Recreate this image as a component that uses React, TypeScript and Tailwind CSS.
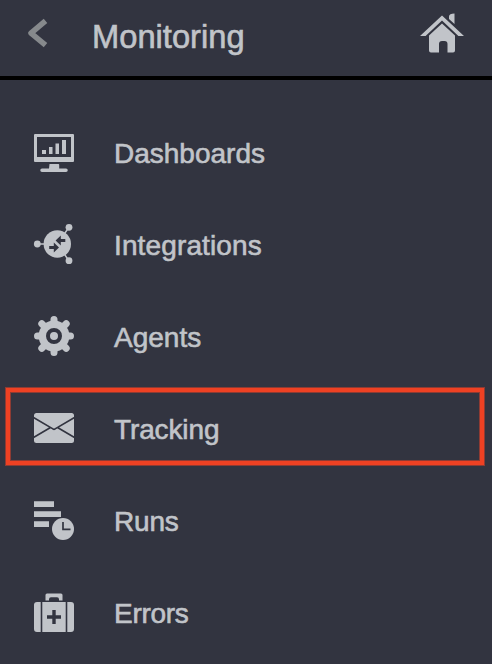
import type { ReactNode } from "react";

const BG = "#323440";

function Dashboard() {
  return (
    <svg width="60" height="60" viewBox="0 0 60 60" fill="currentColor">
      <path fillRule="evenodd" d="M11 10h38a1 1 0 0 1 1 1v26a1 1 0 0 1-1 1H11a1 1 0 0 1-1-1V11a1 1 0 0 1 1-1zm2 3v20h34V13z" />
      <path d="M18 26h4v4h-4zM25 23h3.5v7H25zM31.5 19.5H35V30h-3.5zM38 16h4v14h-4zM25.5 40h9a.7.7 0 0 1 .7.7V44.5H42a1.5 1.5 0 0 1 0 3.5H18a1.5 1.5 0 0 1 0-3.5h7z" />
    </svg>
  );
}

function Integration() {
  return (
    <svg width="60" height="60" viewBox="0 0 60 60" fill="currentColor">
      <circle cx="33.3" cy="28" r="13.7" />
      <circle cx="13.3" cy="28" r="3.4" />
      <circle cx="45" cy="11.3" r="3.4" />
      <circle cx="45" cy="44.7" r="3.4" />
      <path d="M14 28h8M45 11l-6 9M45 45l-6-9" stroke="currentColor" strokeWidth="1.5" />
      <path fill={BG} d="M31.6 24.4l5.2-5v3.5H41.3v3h-4.5v3.5zM35 31.6l-5.2-5v3.5h-4.6v3h4.6v3.5z" />
    </svg>
  );
}

function Gear() {
  return (
    <svg width="60" height="60" viewBox="0 0 60 60" fill="currentColor">
      <g stroke="currentColor" strokeWidth="7" strokeLinecap="round">
        <path d="M30 13.5v33M13.5 30h33M17.8 17.8l24.4 24.4M42.2 17.8l-24.4 24.4" />
      </g>
      <circle cx="30" cy="30" r="15.4" />
      <circle cx="30" cy="30" r="6" fill="currentColor" stroke={BG} strokeWidth="4" />
    </svg>
  );
}

function Envelope() {
  return (
    <svg width="60" height="60" viewBox="0 0 60 60">
      <rect x="10" y="15" width="40" height="30" rx="2.5" fill="currentColor" />
      <path d="M9.5 19.5L28 30.3q2 2 4 0L50.5 19.5M9.5 39.5L26.5 29.5M50.5 39.5L33.5 29.5" fill="none" stroke={BG} strokeWidth="1.6" />
    </svg>
  );
}

function Runs() {
  return (
    <svg width="60" height="60" viewBox="0 0 60 60" fill="currentColor">
      <path d="M10 11.3h20V17H10zM10 21.3h27V27H10zM10 31.3h15V37H10z" />
      <circle cx="39" cy="39" r="12" fill={BG} />
      <circle cx="39" cy="39" r="11" />
      <path d="M39 32v7.3h7.5" fill="none" stroke={BG} strokeWidth="1.7" />
    </svg>
  );
}

function Kit() {
  return (
    <svg width="60" height="60" viewBox="0 0 60 60" fill="currentColor">
      <path d="M21.5 16.5V11q0-1.5 1.5-1.5h14q1.5 0 1.5 1.5v5.5H35v-1.2q0-2-2-2h-6q-2 0-2 2v1.2z" />
      <path d="M16.7 18v30H13q-3 0-3-3V21q0-3 3-3zM43.3 18v30H47q3 0 3-3V21q0-3-3-3zM18.3 18h23.4v30H18.3z" />
      <path d="M30 26v14M23 33h14" stroke={BG} strokeWidth="3.4" />
    </svg>
  );
}

const items: { label: string; icon: ReactNode; iconClass: string; labelClass: string }[] = [
  { label: "Dashboards", icon: <Dashboard />, iconClass: "pt-0.5", labelClass: "tracking-normal" },
  { label: "Integrations", icon: <Integration />, iconClass: "pt-0.5", labelClass: "tracking-[0.13px]" },
  { label: "Agents", icon: <Gear />, iconClass: "pb-0.5", labelClass: "tracking-normal" },
  { label: "Tracking", icon: <Envelope />, iconClass: "pb-0.5", labelClass: "tracking-[-0.12px]" },
  { label: "Runs", icon: <Runs />, iconClass: "pb-0.5", labelClass: "tracking-[-0.2px]" },
  { label: "Errors", icon: <Kit />, iconClass: "pt-0.5", labelClass: "tracking-[-0.3px]" },
];

export default function App() {
  return (
    <div className="relative h-[664px] w-[492px] overflow-hidden bg-[#323440] font-['Liberation_Sans',Arial,sans-serif] text-[#c1c4c9]">
      <header className="flex h-20 items-start border-b-4 border-black">
        <svg className="mt-[13px] ml-6 shrink-0 text-[#86898c]" width="28" height="40" viewBox="0 0 28 40" fill="none" stroke="currentColor">
          <path d="M21.5 7.8L7 20.2 21.5 32.2" strokeWidth="5.5" strokeLinejoin="round" />
        </svg>
        <h1 className="mt-[17px] ml-10 text-[32.7px] leading-10 [-webkit-text-stroke:0.6px_currentColor]">Monitoring</h1>
        <svg className="mt-2.5 mr-[26px] ml-auto" width="48" height="46" viewBox="0 0 48 46" fill="currentColor">
          <path d="M2 26L24 5.5 46 26h-5.6L24 10.5 7.6 26zM31 6.5c0-2 2-3 5.5-3V14L31 9z" />
          <path d="M24 13.5L37 25.5V40.5q0 2-2 2h-5.5V34q0-3-3-3h-2.5q-3 0-3 3v8.5h-8q-2 0-2-2V25.5z" />
        </svg>
      </header>
      <nav className="pt-[27px]">
        {items.map(({ label, icon, iconClass, labelClass }) => (
          <a key={label} className="flex h-[92px] items-center pl-6">
            <span className={`shrink-0 ${iconClass}`}>{icon}</span>
            <span className={`ml-[30px] pt-px text-[28px] leading-8 [-webkit-text-stroke:0.6px_currentColor] ${labelClass}`}>{label}</span>
          </a>
        ))}
      </nav>
      <div className="absolute top-[388px] left-[6px] h-[77px] w-[478px] border-4 border-[#ee4123] shadow-[0_0_0_1px_#8e3b33,inset_0_0_0_1px_#8e3b33]" />
    </div>
  );
}
